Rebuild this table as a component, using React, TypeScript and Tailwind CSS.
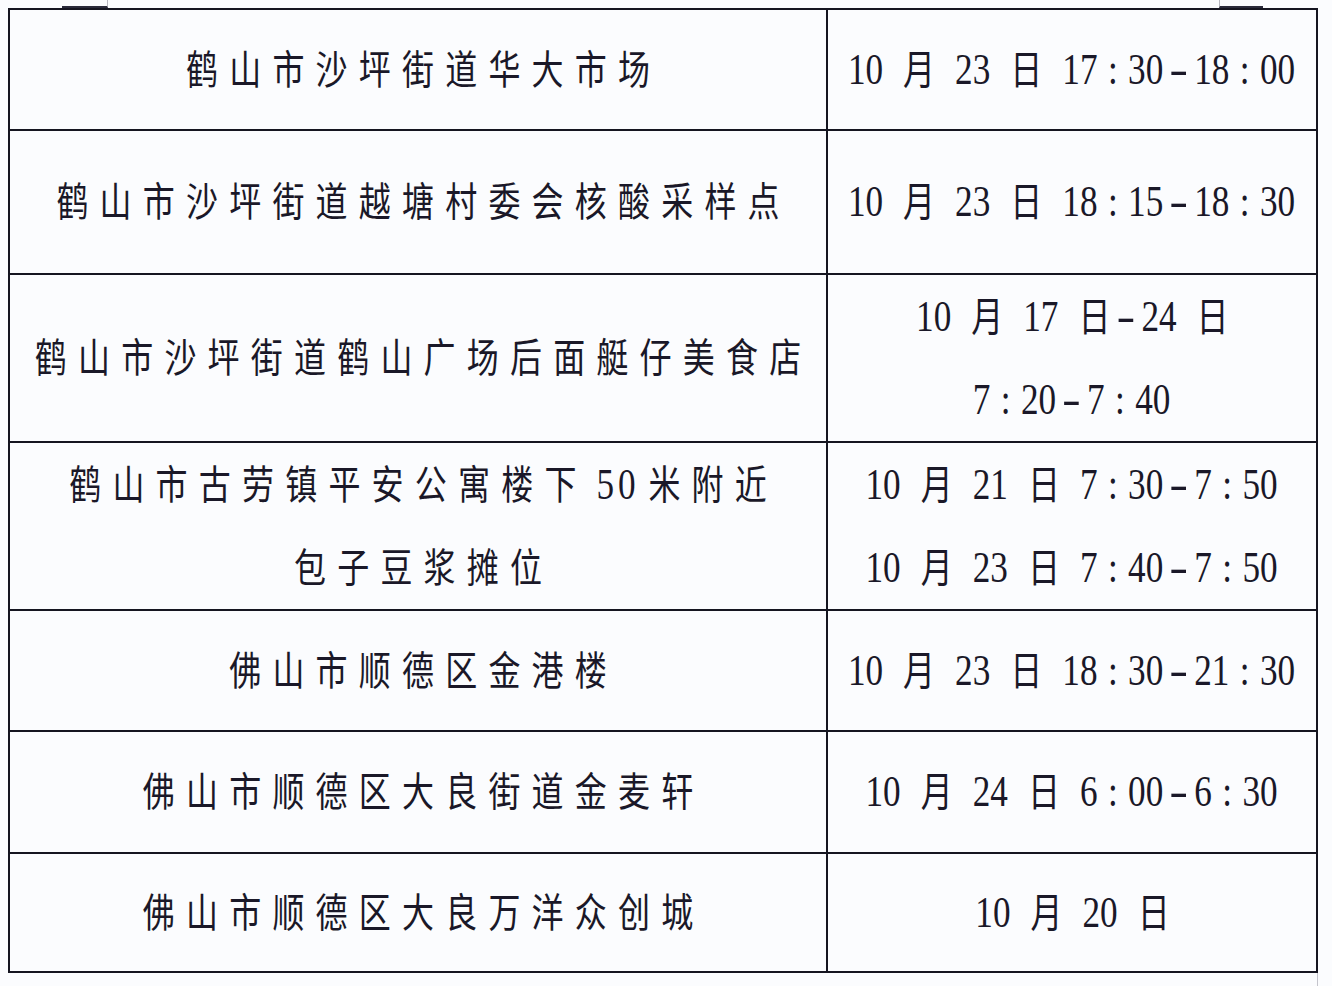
import React from 'react';

type Row = { left: string[]; right: string[]; h: string };

const rows: Row[] = [
  { left: ['鹤山市沙坪街道华大市场'], right: ['10 月 23 日 17:30-18:00'], h: 'h-[121px]' },
  { left: ['鹤山市沙坪街道越塘村委会核酸采样点'], right: ['10 月 23 日 18:15-18:30'], h: 'h-[144px]' },
  { left: ['鹤山市沙坪街道鹤山广场后面艇仔美食店'], right: ['10 月 17 日-24 日', '7:20-7:40'], h: 'h-[168px]' },
  {
    left: ['鹤山市古劳镇平安公寓楼下 50 米附近', '包子豆浆摊位'],
    right: ['10 月 21 日 7:30-7:50', '10 月 23 日 7:40-7:50'],
    h: 'h-[168px]',
  },
  { left: ['佛山市顺德区金港楼'], right: ['10 月 23 日 18:30-21:30'], h: 'h-[121px]' },
  { left: ['佛山市顺德区大良街道金麦轩'], right: ['10 月 24 日 6:00-6:30'], h: 'h-[122px]' },
  { left: ['佛山市顺德区大良万洋众创城'], right: ['10 月 20 日'], h: 'h-[119px]' },
];

const cjk = "font-['Noto_Sans_CJK_SC',sans-serif] text-[40px] font-normal";
const num = "font-['Liberation_Serif',serif] text-[44px]";

// split a string into runs so digits and hanzi can get their own font
function Line({ text, date }: { text: string; date?: boolean }) {
  const parts = text.match(/\d+|[\u4e00-\u9fff]|:|-| /g) ?? [];
  return (
    <div
      className={
        'flex h-[84px] items-center justify-center whitespace-nowrap scale-x-[0.8] ' +
        (date ? '[word-spacing:14px]' : 'pl-[14px]')
      }
    >
      <span className={num}>
        {parts.map((p, i) => {
          if (/[\u4e00-\u9fff]/.test(p)) {
            return (
              <span key={i} className={cjk + (date ? '' : ' tracking-[14px]')}>
                {p}
              </span>
            );
          }
          if (p === ':') {
            return (
              <span key={i} className="mx-[13px]">
                :
              </span>
            );
          }
          if (p === '-') {
            return (
              <span key={i} className="mx-[12px] inline-block scale-x-[1.6]">
                -
              </span>
            );
          }
          if (p === ' ') return <span key={i}> </span>;
          return (
            <span key={i} className={date ? '' : 'tracking-[5px]'}>
              {p}
            </span>
          );
        })}
      </span>
    </div>
  );
}

export default function App() {
  return (
    <div className="h-[986px] w-[1332px] overflow-hidden bg-[#fbfcfe] text-[#1a1828]">
      {/* leftovers of the row above */}
      <div className="flex h-[8px]">
        <div className="w-[62px]" />
        <div className="w-[46px] border-r border-b-2 border-r-[#b8b8c0] border-b-[#2a2a3a]" />
        <div className="w-[1111px]" />
        <div className="w-[44px] border-l border-b-2 border-l-[#b8b8c0] border-b-[#2a2a3a]" />
      </div>

      <div className="ml-[8px] grid w-[1310px] grid-cols-[818px_490px] border-t-2 border-l-2 border-[#151520]">
        {rows.map((r, i) => (
          <React.Fragment key={i}>
            <div
              className={
                'box-border flex flex-col items-center justify-center border-r-2 border-b-2 border-[#151520] ' + r.h
              }
            >
              {r.left.map((t, j) => (
                <Line key={j} text={t} />
              ))}
            </div>
            <div
              className={
                'box-border flex flex-col items-center justify-center border-r-2 border-b-2 border-[#151520] ' + r.h
              }
            >
              {r.right.map((t, j) => (
                <Line key={j} text={t} date />
              ))}
            </div>
          </React.Fragment>
        ))}
      </div>

      <div className="flex h-[14px]">
        <div className="w-[1317px]" />
        <div className="w-px bg-[#c4c4cc]" />
      </div>
    </div>
  );
}
